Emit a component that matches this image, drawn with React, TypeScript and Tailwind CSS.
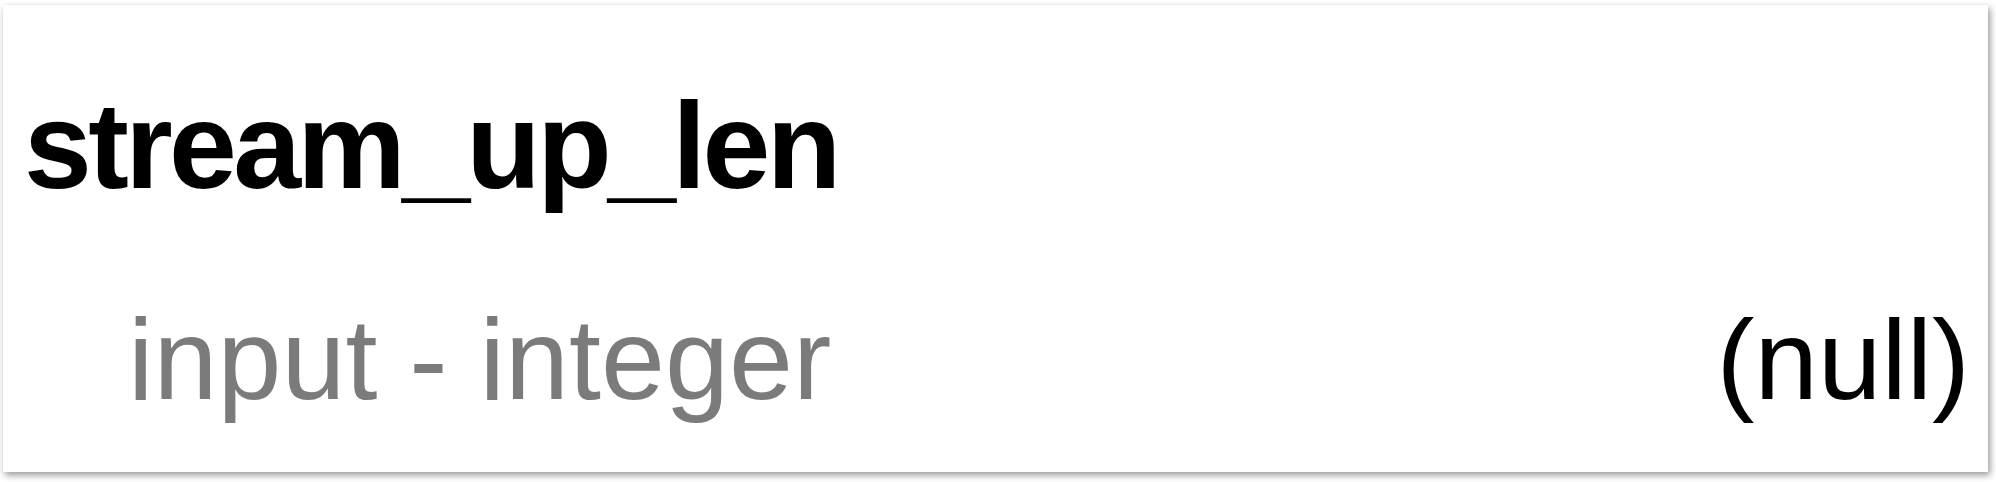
import React from "react";

const field = {
  name: "stream_up_len",
  kind: "input - integer",
  value: "(null)",
};

const App = () => {
  return (
    <div className="w-[1996px] h-[482px] bg-white overflow-hidden font-['Liberation_Sans',Arial,sans-serif]">
      {/* property card */}
      <div className="ml-[3px] mt-[5px] w-[1985px] h-[467px] bg-white flex flex-col pt-[80px] pl-[21px] pr-[18px] shadow-[2px_3px_7px_rgba(0,0,0,0.42)]">
        <h1 className="text-[122px] leading-none font-bold tracking-[-0.03em] text-black">
          {field.name}
        </h1>
        <div className="flex items-baseline justify-between mt-[95px] pl-[104px]">
          <span className="text-[115px] leading-none text-[#7b7b7b]">
            {field.kind}
          </span>
          <span className="text-[114px] leading-none text-black">
            {field.value}
          </span>
        </div>
      </div>
    </div>
  );
};

export default App;
